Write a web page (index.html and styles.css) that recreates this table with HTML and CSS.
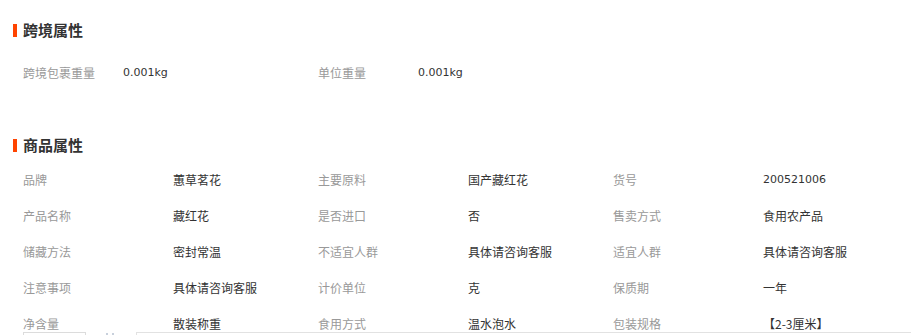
FILE: index.html
```html
<!DOCTYPE html>
<html lang="zh-CN">
<head>
<meta charset="utf-8">
<title>属性</title>
<link rel="stylesheet" href="styles.css">
</head>
<body>
<div class="page">
  <section class="block">
    <h2 class="heading">跨境属性</h2>
    <dl class="attrs attrs-two">
      <dt>跨境包裹重量</dt><dd class="num">0.001kg</dd>
      <dt>单位重量</dt><dd class="num">0.001kg</dd>
    </dl>
  </section>
  <section class="block block-second">
    <h2 class="heading">商品属性</h2>
    <dl class="attrs attrs-six">
      <dt>品牌</dt><dd>蕙草茗花</dd>
      <dt>主要原料</dt><dd>国产藏红花</dd>
      <dt>货号</dt><dd class="num">200521006</dd>
      <dt>产品名称</dt><dd>藏红花</dd>
      <dt>是否进口</dt><dd>否</dd>
      <dt>售卖方式</dt><dd>食用农产品</dd>
      <dt>储藏方法</dt><dd>密封常温</dd>
      <dt>不适宜人群</dt><dd>具体请咨询客服</dd>
      <dt>适宜人群</dt><dd>具体请咨询客服</dd>
      <dt>注意事项</dt><dd>具体请咨询客服</dd>
      <dt>计价单位</dt><dd>克</dd>
      <dt>保质期</dt><dd>一年</dd>
      <dt>净含量</dt><dd>散装称重</dd>
      <dt>食用方式</dt><dd>温水泡水</dd>
      <dt>包装规格</dt><dd>【2-3厘米】</dd>
    </dl>
  </section>
  <div class="tabs">
    <div class="tab"></div>
    <div class="dots"><span></span><span></span></div>
    <div class="panel"></div>
  </div>
</div>
</body>
</html>
```
FILE: styles.css
```css
* { box-sizing: border-box; }
html, body { margin: 0; padding: 0; background: #fff; }
body {
  font-family: "Noto Sans CJK SC", "Liberation Sans", sans-serif;
  font-size: 12px;
  color: #333;
}
.page { padding: 22px 0 0 13px; }
.heading {
  margin: 0;
  display: flex;
  align-items: center;
  height: 16px;
  font-size: 15px;
  font-weight: bold;
  color: #333;
  line-height: 16px;
}
.heading::before {
  content: "";
  width: 4px;
  height: 13px;
  background: #ff4400;
  margin-right: 6px;
}
.attrs {
  margin: 27px 0 0 0;
  padding-left: 10px;
  display: grid;
  row-gap: 20px;
  line-height: 16px;
}
.attrs dt { color: #999; margin: 0; white-space: nowrap; }
.attrs dd { color: #333; margin: 0; white-space: nowrap; }
.attrs .num { font-family: "DejaVu Sans", "Liberation Sans", sans-serif; font-size: 11px; }
.attrs-two { grid-template-columns: 100px 195px 100px 195px; }
.block-second { margin-top: 56px; }
.block-second .attrs { margin-top: 19px; }
.attrs-six { grid-template-columns: 150px 145px 150px 145px 150px 145px; }
.tabs {
  display: flex;
  align-items: flex-start;
  padding-left: 10px;
  height: 3px;
  overflow: hidden;
}
.tab {
  width: 63px;
  height: 3px;
  border: 1px solid #dcdcdc;
  border-bottom: none;
}
.dots {
  width: 50px;
  display: flex;
  gap: 4px;
  padding: 1px 0 0 20px;
}
.dots span {
  width: 2px;
  height: 2px;
  background: #c8d0dc;
}
.panel {
  width: 775px;
  height: 3px;
  border-top: 1px solid #e2e2e2;
  border-left: 1px solid #e2e2e2;
}
```
